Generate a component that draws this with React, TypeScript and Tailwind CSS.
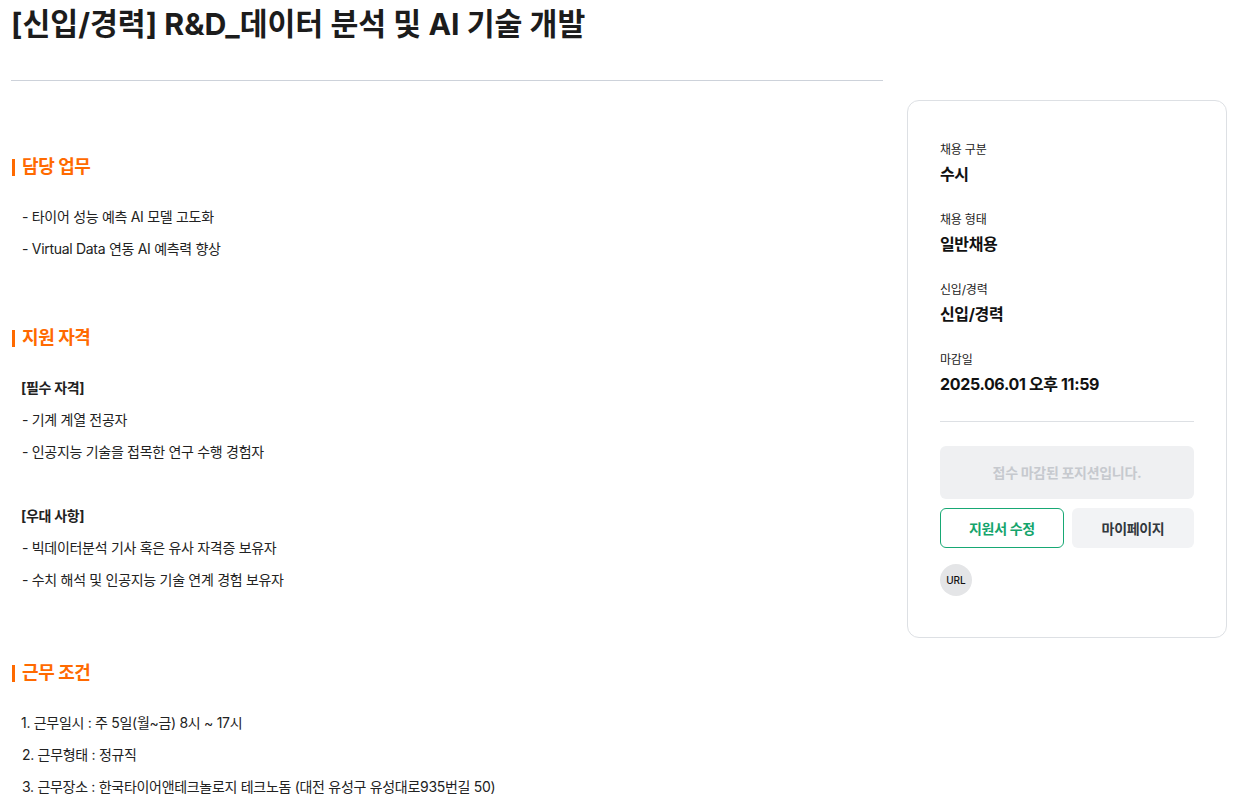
export default function App() {
  const font = { fontFamily: 'Inter, "Noto Sans CJK KR", sans-serif' };
  const Heading = ({ children }: { children: string }) => (
    <h2 className="flex items-center h-6 text-[18px] font-bold text-[#ff6a00] leading-6 tracking-[-0.4px]">
      <span className="w-[3px] h-[17px] bg-[#ff6a00] ml-[1px] mr-[7px]" />
      {children}
    </h2>
  );
  const Item = ({ children, bold, x = 22 }: { children: string; bold?: boolean; x?: number }) => (
    <p
      className={`text-[14px] leading-8 text-[#222] tracking-[-0.3px] ${bold ? "font-bold" : ""} ${x === 21 ? "pl-[10px]" : "pl-[11px]"}`}
    >
      {children}
    </p>
  );
  const Info = ({ label, value, first }: { label: string; value: string; first?: boolean }) => (
    <div className={first ? "" : "mt-[26px]"}>
      <div className="text-[12px] leading-4 text-[#222] tracking-[-0.2px]">{label}</div>
      <div className="mt-[4px] text-[16px] leading-6 font-bold text-[#111] tracking-[-0.35px]">{value}</div>
    </div>
  );
  return (
    <div style={font} className="w-[1241px] h-[808px] overflow-hidden bg-white flex gap-6 pl-[11px]">
      <div className="w-[872px] shrink-0">
        <h1 className="text-[30.3px] leading-[48px] font-bold text-[#1c1c1c]">
          [신입/경력] R&amp;D_데이터 분석 및 AI 기술 개발
        </h1>
        <div className="mt-[32px] h-px bg-[#cdd2da]" />
        <div className="pt-[74px]">
          <Heading>담당 업무</Heading>
          <div className="mt-[22px]">
            <Item>- 타이어 성능 예측 AI 모델 고도화</Item>
            <Item>- Virtual Data 연동 AI 예측력 향상</Item>
          </div>
          <div className="mt-[61px]">
            <Heading>지원 자격</Heading>
          </div>
          <div className="mt-[22px]">
            <Item bold x={21}>[필수 자격]</Item>
            <Item>- 기계 계열 전공자</Item>
            <Item>- 인공지능 기술을 접목한 연구 수행 경험자</Item>
            <div className="h-8" />
            <Item bold x={21}>[우대 사항]</Item>
            <Item>- 빅데이터분석 기사 혹은 유사 자격증 보유자</Item>
            <Item>- 수치 해석 및 인공지능 기술 연계 경험 보유자</Item>
          </div>
          <div className="mt-[65px]">
            <Heading>근무 조건</Heading>
          </div>
          <div className="mt-[22px]">
            <Item x={21}>1. 근무일시 : 주 5일(월~금) 8시 ~ 17시</Item>
            <Item>2. 근무형태 : 정규직</Item>
            <Item>3. 근무장소 : 한국타이어앤테크놀로지 테크노돔 (대전 유성구 유성대로935번길 50)</Item>
          </div>
        </div>
      </div>
      <div className="w-[320px] shrink-0 mt-[100px] self-start border border-[#dde0e4] rounded-xl px-8 pt-[41px] pb-[41px]">
        <Info first label="채용 구분" value="수시" />
        <Info label="채용 형태" value="일반채용" />
        <Info label="신입/경력" value="신입/경력" />
        <Info label="마감일" value="2025.06.01 오후 11:59" />
        <div className="mt-[25px] h-px bg-[#dde0e4]" />
        <div className="mt-6 h-[53px] rounded-md bg-[#eff0f2] flex items-center justify-center text-[14px] font-bold text-[#c6c9ce] tracking-[-0.3px]">
          접수 마감된 포지션입니다.
        </div>
        <div className="mt-[9px] flex gap-2">
          <button className="flex-1 h-10 rounded-md border border-[#17a874] text-[14px] font-bold text-[#14a46c] bg-white tracking-[-0.3px]">
            지원서 수정
          </button>
          <button className="flex-1 h-10 rounded-md bg-[#f2f3f5] text-[14px] font-bold text-[#33383e] tracking-[-0.3px]">
            마이페이지
          </button>
        </div>
        <div className="mt-4 w-8 h-8 rounded-full bg-[#e4e5e7] flex items-center justify-center text-[10px] font-medium text-[#111]">
          URL
        </div>
      </div>
    </div>
  );
}
